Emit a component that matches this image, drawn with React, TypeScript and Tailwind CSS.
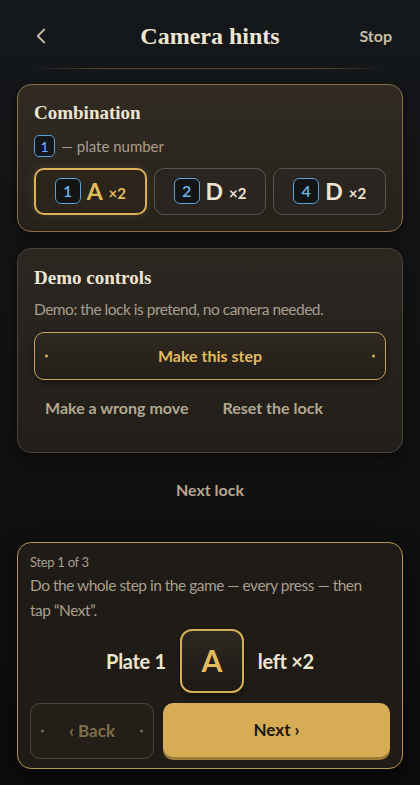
import { ChevronLeft } from 'lucide-react';

const sans = { fontFamily: 'Lato, "Open Sans", sans-serif' };
const serif = { fontFamily: '"Liberation Serif", "DejaVu Serif", serif' };

function PlateBadge({ n, small }: { n: number; small?: boolean }) {
  return (
    <span
      className={
        small
          ? 'flex h-[22px] w-[21px] items-center justify-center rounded-[5px] border border-[#5aa3d6] bg-[#14171a] text-[14px] text-[#6cb4e6]'
          : 'flex h-[26px] w-[26px] items-center justify-center rounded-[6px] border-[1.5px] border-[#5aa3d6] bg-[#121416] text-[16px] font-semibold text-[#6cb4e6]'
      }
    >
      {n}
    </span>
  );
}

function Chip({ n, letter, active }: { n: number; letter: string; active?: boolean }) {
  return (
    <div
      className={
        active
          ? 'flex h-[47px] items-center justify-center gap-[6px] rounded-[10px] border-2 border-[#d9b25a] bg-[#2a241b] shadow-[0_0_10px_rgba(217,178,90,0.18)]'
          : 'flex h-[47px] items-center justify-center gap-[6px] rounded-[10px] border border-[#5c554b] bg-[#2a2520]'
      }
    >
      <PlateBadge n={n} />
      <span className={active ? 'text-[23px] font-bold text-[#e3bb5f]' : 'text-[23px] font-bold text-[#ece5d4]'}>
        {letter}
      </span>
      <span className={active ? 'mt-[4px] text-[15px] font-bold text-[#e3bb5f]' : 'mt-[4px] text-[15px] font-bold text-[#ece5d4]'}>
        ×2
      </span>
    </div>
  );
}

export default function App() {
  return (
    <div
      className="min-h-[785px] w-full bg-[linear-gradient(180deg,#15181b_0%,#121213_45%,#0e0c0b_100%)] pb-4"
      style={sans}
    >
      {/* Header */}
      <div className="grid h-[68px] grid-cols-[1fr_auto_1fr] items-center pl-[28px] pr-[28px] pt-[4px]">
        <ChevronLeft className="h-[26px] w-[26px] text-[#c2b8a2]" strokeWidth={1.75} />
        <h1 className="text-[24px] font-bold text-[#eee5d1]" style={serif}>
          Camera hints
        </h1>
        <span className="justify-self-end text-[16px] font-bold text-[#c8bda5]">Stop</span>
      </div>
      <div className="mx-[35px] h-px bg-[linear-gradient(90deg,rgba(140,110,60,0)_0%,#5e4b2c_20%,#5e4b2c_80%,rgba(140,110,60,0)_100%)]" />

      {/* Combination */}
      <section className="mx-[17px] mt-[15px] rounded-[14px] border border-[#8a7047] bg-[linear-gradient(180deg,#312b23_0%,#26211b_100%)] px-4 pb-[16px] pt-[15px] shadow-[0_4px_14px_rgba(0,0,0,0.5)]">
        <h2 className="text-[19px] font-bold leading-[26px] text-[#eee5d1]" style={serif}>
          Combination
        </h2>
        <div className="mt-[9px] flex items-center gap-[6px]">
          <PlateBadge n={1} small />
          <span className="text-[15px] text-[#a89f8e]">— plate number</span>
        </div>
        <div className="mt-[10px] grid grid-cols-3 gap-[7px]">
          <Chip n={1} letter="A" active />
          <Chip n={2} letter="D" />
          <Chip n={4} letter="D" />
        </div>
      </section>

      {/* Demo controls */}
      <section className="mx-[17px] mt-[16px] rounded-[14px] border border-[#4a443c] bg-[linear-gradient(180deg,#2c2721_0%,#221e19_100%)] px-4 pb-[24px] pt-[16px] shadow-[0_4px_14px_rgba(0,0,0,0.5)]">
        <h2 className="text-[19px] font-bold leading-[26px] text-[#eee5d1]" style={serif}>
          Demo controls
        </h2>
        <p className="mt-[7px] text-[15.5px] leading-[22px] tracking-[-0.5px] text-[#a89f8e]">
          Demo: the lock is pretend, no camera needed.
        </p>
        <button className="relative mt-[12px] flex h-[48px] w-full items-center justify-center rounded-[10px] border border-[#c9a45c] bg-[linear-gradient(180deg,#2f2921_0%,#231e18_100%)] shadow-[0_2px_6px_rgba(0,0,0,0.45)]">
          <span className="absolute left-[10px] top-1/2 h-[3px] w-[3px] -translate-y-1/2 rounded-full bg-[#d9b25a]" />
          <span className="text-[16px] font-bold text-[#e3bb5f]">Make this step</span>
          <span className="absolute right-[10px] top-1/2 h-[3px] w-[3px] -translate-y-1/2 rounded-full bg-[#d9b25a]" />
        </button>
        <div className="mt-[8px] flex h-[40px] items-center gap-[34px] pl-[11px]">
          <span className="text-[16px] font-bold text-[#b3a88f]">Make a wrong move</span>
          <span className="text-[16px] font-bold text-[#b3a88f]">Reset the lock</span>
        </div>
      </section>

      {/* Next lock */}
      <div className="mt-[17px] flex h-[40px] items-center justify-center">
        <span className="text-[16px] font-bold text-[#b3a88f]">Next lock</span>
      </div>

      {/* Step card */}
      <section className="mx-[17px] mt-[32px] rounded-[14px] border border-[#b8944f] bg-[#1f1b16] px-3 pb-[9px] pt-[10px] shadow-[0_6px_18px_rgba(0,0,0,0.6)]">
        <div className="text-[13px] leading-[18px] tracking-[-0.3px] text-[#a89f8e]">Step 1 of 3</div>
        <p className="mt-[2px] max-w-[345px] text-[15.5px] leading-[25px] tracking-[-0.5px] text-[#a89f8e]">
          Do the whole step in the game — every press — then tap “Next”.
        </p>
        <div className="mt-[6px] flex items-center justify-center gap-[14px]">
          <span className="text-[20px] font-bold tracking-[-0.3px] text-[#eee5d1]">Plate 1</span>
          <div className="flex h-[64px] w-[64px] items-center justify-center rounded-[12px] border-2 border-[#d6ad55] bg-[linear-gradient(180deg,#2e2821_0%,#1d1915_100%)] shadow-[0_2px_4px_rgba(0,0,0,0.5)]">
            <span className="text-[30px] font-bold text-[#e3bb5f]">A</span>
          </div>
          <span className="text-[20px] font-bold tracking-[-0.3px] text-[#eee5d1]">left ×2</span>
        </div>
        <div className="mt-[10px] flex gap-[9px]">
          <button className="relative flex h-[56px] w-[124px] items-center justify-center rounded-[10px] border border-[#52483a] bg-[#231e18]">
            <span className="absolute left-[10px] top-1/2 h-[3px] w-[3px] -translate-y-1/2 rounded-full bg-[#7a6c48]" />
            <span className="text-[17px] font-bold text-[#7c6e4a]">‹ Back</span>
            <span className="absolute right-[10px] top-1/2 h-[3px] w-[3px] -translate-y-1/2 rounded-full bg-[#7a6c48]" />
          </button>
          <button className="flex h-[54px] flex-1 items-center justify-center rounded-[10px] bg-[#d6ad55] shadow-[0_3px_0_#9c7a35]">
            <span className="text-[17px] font-bold text-[#1c160d]">Next ›</span>
          </button>
        </div>
      </section>
    </div>
  );
}
